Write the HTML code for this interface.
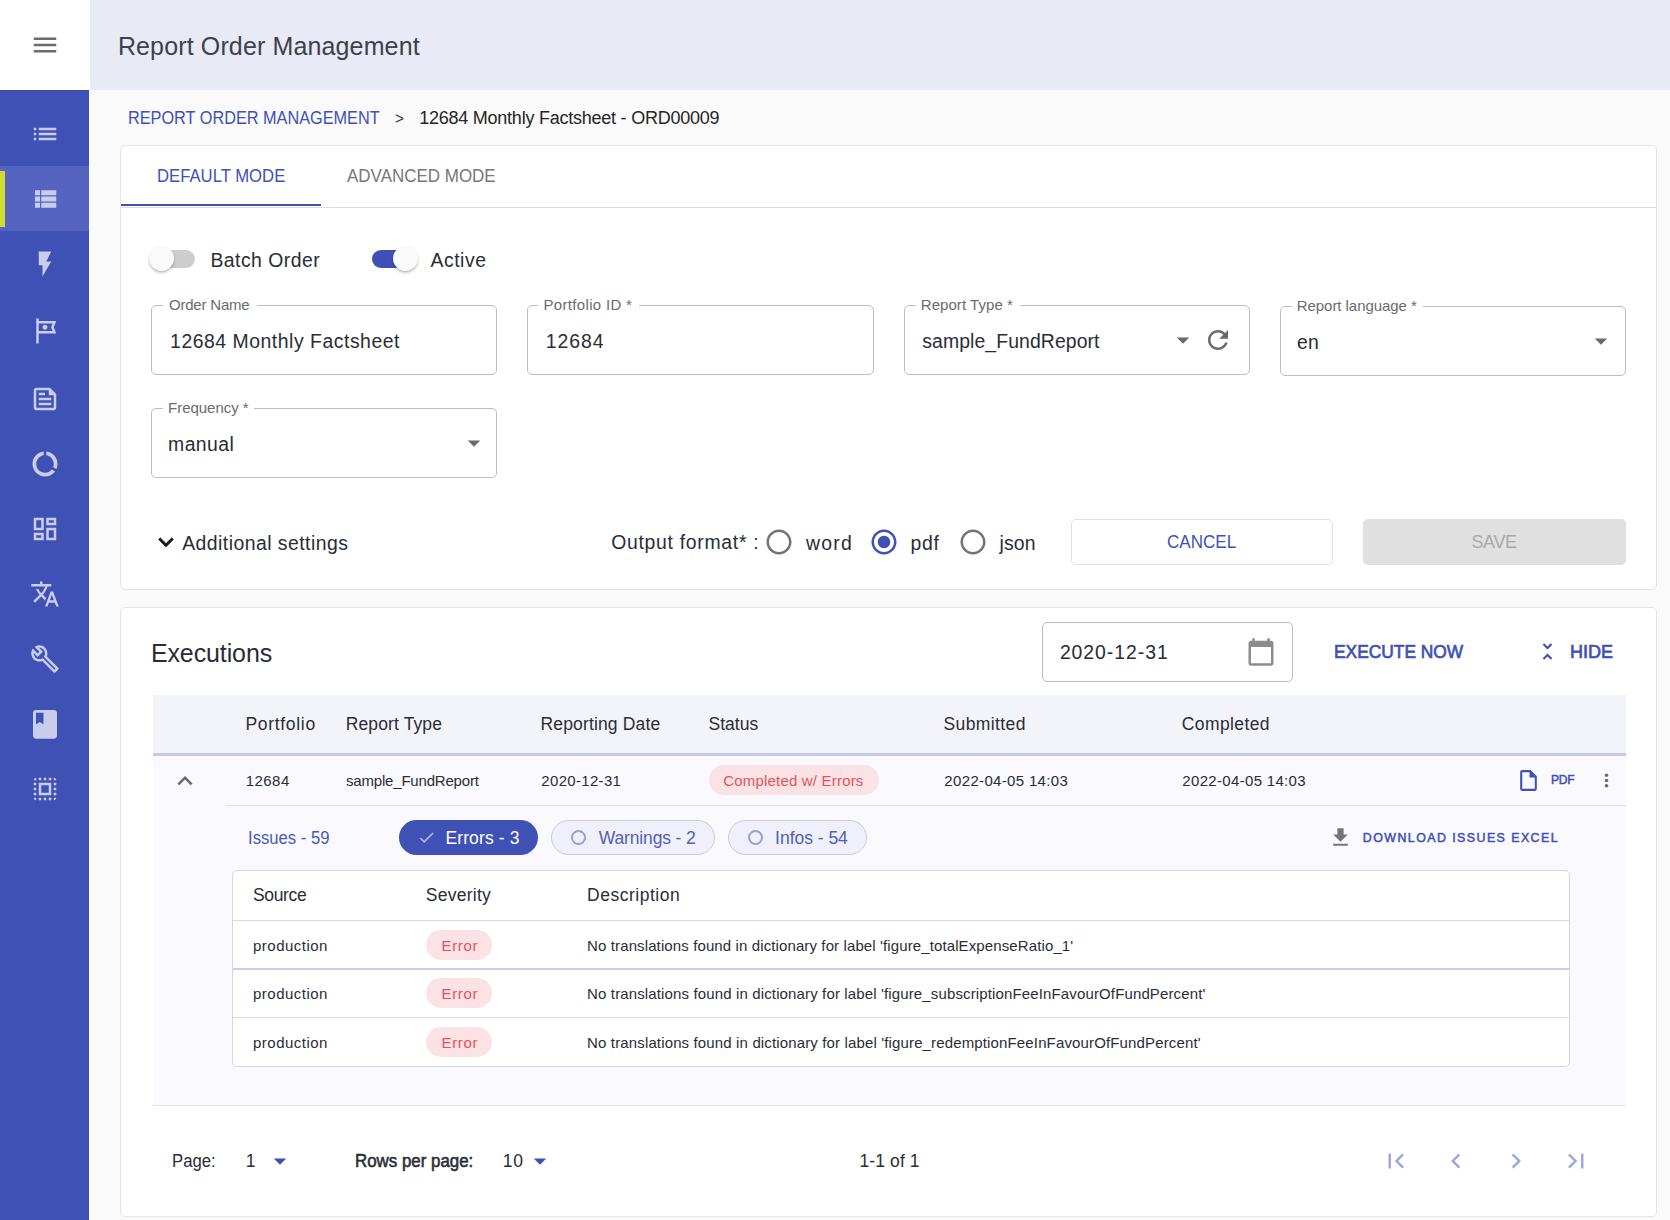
<!DOCTYPE html>
<html lang="en"><head><meta charset="utf-8"><title>Report Order Management</title>
<style>
*{box-sizing:border-box;margin:0;padding:0}
html,body{width:1670px;height:1220px;overflow:hidden;background:#fafafa}
body{position:relative;font-family:"Liberation Sans",Arial,sans-serif;}
.a{position:absolute}
.t{position:absolute;white-space:nowrap;line-height:1;transform-origin:0 50%}
.ic{position:absolute;display:block}
.card{position:absolute;background:#fff;border:1px solid #e4e4e4;border-radius:5px}
.fld{position:absolute;border:1px solid #bdbdbd;border-radius:5px;background:#fff}
.notch{position:absolute;background:#fff;height:3px}
.chip{position:absolute;border-radius:18px}
</style></head><body>
<header>
<div class="a" style="left:0px;top:0px;width:1670px;height:90px;background:#e8eaf6"></div>
<div class="a" style="left:0px;top:0px;width:90px;height:90px;background:#fff"></div>
<svg class="ic" style="left:30.00px;top:30.00px;width:30px;height:30px;" viewBox="0 0 24 24"><path fill="#6c6c6c" d="M3 18h18v-2H3v2zm0-5h18v-2H3v2zm0-7v2h18V6H3z"/></svg>
<span class="t" style="left:117.90px;top:34px;font-size:25px;color:#3d414d;letter-spacing:0.136px;">Report Order Management</span>
</header>
<nav>
<div class="a" style="left:0px;top:90px;width:89px;height:1130px;background:#3f51b5"></div>
<div class="a" style="left:0px;top:90px;width:89px;height:1px;background:#3a4aa6"></div>
<div class="a" style="left:0px;top:166px;width:89px;height:65px;background:#5464c0"></div>
<div class="a" style="left:0px;top:171px;width:5px;height:56px;background:#d3db33"></div>
<svg class="ic" style="left:30.00px;top:119.00px;width:30px;height:30px;" viewBox="0 0 24 24"><path fill="#c8cdec" d="M3 13h2v-2H3v2zm0 4h2v-2H3v2zm0-8h2V7H3v2zm4 4h14v-2H7v2zm0 4h14v-2H7v2zM7 7v2h14V7H7z"/></svg>
<svg class="ic" style="left:30.00px;top:183.80px;width:30px;height:30px;" viewBox="0 0 24 24"><path fill="#c8cdec" d="M4 14h4v-4H4v4zm0 5h4v-4H4v4zM4 9h4V5H4v4zm5 5h12v-4H9v4zm0 5h12v-4H9v4zM9 5v4h12V5H9z"/></svg>
<svg class="ic" style="left:30.00px;top:248.80px;width:30px;height:30px;" viewBox="0 0 24 24"><path fill="#c8cdec" d="M7 2v11h3v9l7-12h-4l4-8z"/></svg>
<svg class="ic" style="left:30.00px;top:316.00px;width:30px;height:30px;" viewBox="0 0 24 24"><path fill="#c8cdec" d="M21 4H7V2H5v20h2v-8h14l-2-5 2-5zm-3.86 5.74l.9 2.26H7V6h11.05l-.9 2.26-.3.74.29.74zM14 9c0 1.1-.9 2-2 2s-2-.9-2-2 .9-2 2-2 2 .9 2 2z"/></svg>
<svg class="ic" style="left:30.00px;top:383.80px;width:30px;height:30px;" viewBox="0 0 24 24"><path fill="#c8cdec" d="M16 3H5c-1.1 0-2 .9-2 2v14c0 1.1.9 2 2 2h14c1.1 0 2-.9 2-2V8l-5-5zm3 16H5V5h10v4h4v10zM7 17h10v-2H7v2zm5-10H7v2h5V7zm-5 6h10v-2H7v2z"/></svg>
<svg class="ic" style="left:30.00px;top:449.30px;width:30px;height:30px;" viewBox="0 0 24 24"><path fill="#c8cdec" d="M13 2.05v3.03c3.39.49 6 3.39 6 6.92 0 .9-.18 1.75-.48 2.54l2.6 1.53c.56-1.24.88-2.62.88-4.07 0-5.18-3.95-9.45-9-9.95zM12 19c-3.87 0-7-3.13-7-7 0-3.53 2.61-6.43 6-6.92V2.05c-5.06.5-9 4.76-9 9.95 0 5.52 4.47 10 9.99 10 3.31 0 6.24-1.61 8.06-4.09l-2.6-1.53C16.17 17.98 14.21 19 12 19z"/></svg>
<svg class="ic" style="left:30.00px;top:514.00px;width:30px;height:30px;" viewBox="0 0 24 24"><path fill="#c8cdec" d="M19 5v2h-4V5h4M9 5v6H5V5h4m10 8v6h-4v-6h4M9 17v2H5v-2h4M21 3h-8v6h8V3zM11 3H3v10h8V3zm10 8h-8v10h8V11zm-10 4H3v6h8v-6z"/></svg>
<svg class="ic" style="left:30.00px;top:579.20px;width:30px;height:30px;" viewBox="0 0 24 24"><path fill="#c8cdec" d="M12.87 15.07l-2.54-2.51.03-.03c1.74-1.94 2.98-4.17 3.71-6.53H17V4h-7V2H8v2H1v1.99h11.17C11.5 7.92 10.44 9.75 9 11.35 8.07 10.32 7.3 9.19 6.69 8h-2c.73 1.63 1.73 3.17 2.98 4.56l-5.09 5.02L4 19l5-5 3.11 3.11.76-2.04zM18.5 10h-2L12 22h2l1.12-3h4.75L21 22h2l-4.5-12zm-2.62 7l1.62-4.33L19.12 17h-3.24z"/></svg>
<svg class="ic" style="left:30.00px;top:643.70px;width:30px;height:30px;" viewBox="0 0 24 24"><path fill="#c8cdec" d="M22.61 18.99l-9.08-9.08c.93-2.34.45-5.1-1.44-7C9.79.61 6.21.4 3.66 2.26L7.5 6.11 6.08 7.52 2.25 3.69C.39 6.23.6 9.82 2.9 12.11c1.86 1.86 4.57 2.35 6.89 1.48l9.11 9.11c.39.39 1.02.39 1.41 0l2.3-2.3c.4-.38.4-1.01 0-1.41zm-3 1.6l-9.46-9.46c-.61.45-1.29.72-2 .82-1.36.2-2.79-.21-3.83-1.25C3.37 9.76 2.93 8.5 3 7.26l3.09 3.09 4.24-4.24-3.09-3.09c1.24-.07 2.49.37 3.44 1.31 1.08 1.08 1.49 2.57 1.24 3.96-.12.71-.42 1.37-.88 1.96l9.45 9.45-.88.89z"/></svg>
<svg class="ic" style="left:30.00px;top:773.90px;width:30px;height:30px;" viewBox="0 0 24 24"><path fill="#c8cdec" d="M3 5h2V3c-1.1 0-2 .9-2 2zm0 8h2v-2H3v2zm4 8h2v-2H7v2zM3 9h2V7H3v2zm10-6h-2v2h2V3zm6 0v2h2c0-1.1-.9-2-2-2zM5 21v-2H3c0 1.1.9 2 2 2zm-2-4h2v-2H3v2zM9 3H7v2h2V3zm2 18h2v-2h-2v2zm8-8h2v-2h-2v2zm0 8c1.1 0 2-.9 2-2h-2v2zm0-12h2V7h-2v2zm0 8h2v-2h-2v2zm-4 4h2v-2h-2v2zm0-16h2V3h-2v2zM7 17h10V7H7v10zm2-8h6v6H9V9z"/></svg>
<svg class="ic" style="left:27px;top:707.2px;width:36px;height:34.5px" viewBox="0 0 24 24" preserveAspectRatio="none"><path fill="#c8cdec" d="M18 2H6c-1.1 0-2 .9-2 2v16c0 1.1.9 2 2 2h12c1.1 0 2-.9 2-2V4c0-1.1-.9-2-2-2zM6 4h5v8l-2.5-1.5L6 12V4z"/></svg>
</nav>
<main>
<div>
<span class="t" style="left:127.74px;top:109px;font-size:18px;color:#3f51b5;transform:scaleX(0.9040);">REPORT ORDER MANAGEMENT</span>
<span class="t" style="left:395.00px;top:110px;font-size:17px;color:#333;transform:scaleX(0.9063);">&gt;</span>
<span class="t" style="left:419.16px;top:109px;font-size:18px;color:#262626;letter-spacing:-0.236px;">12684 Monthly Factsheet - ORD00009</span>
</div>
<section>
<div class="card" style="left:120px;top:145px;width:1537px;height:445px;"></div>
<div class="a" style="left:121px;top:207px;width:1535px;height:1px;background:#dcdcdc"></div>
<div class="a" style="left:121px;top:203.7px;width:200px;height:2.6px;background:#3f51b5"></div>
<span class="t" style="left:157.10px;top:167px;font-size:18px;color:#3f51b5;transform:scaleX(0.9270);">DEFAULT MODE</span>
<span class="t" style="left:347.00px;top:167px;font-size:18px;color:#777;transform:scaleX(0.9427);">ADVANCED MODE</span>
<div class="a" style="left:150px;top:250.2px;width:45px;height:17.4px;background:#cdcdcd;border-radius:9px"></div>
<div class="a" style="left:148.6px;top:245.6px;width:25px;height:25px;background:#fafafa;border-radius:50%;box-shadow:0 2px 3px rgba(0,0,0,.2),0 1px 1px rgba(0,0,0,.1)"></div>
<span class="t" style="left:210.40px;top:251px;font-size:19.4px;color:#2a2d36;letter-spacing:0.480px;">Batch Order</span>
<div class="a" style="left:371.5px;top:250.2px;width:45px;height:17.4px;background:#3f4fb5;border-radius:9px"></div>
<div class="a" style="left:392.6px;top:245.6px;width:25px;height:25px;background:#fafafa;border-radius:50%;box-shadow:0 2px 3px rgba(0,0,0,.2),0 1px 1px rgba(0,0,0,.1)"></div>
<span class="t" style="left:430.42px;top:251px;font-size:19.4px;color:#2a2d36;letter-spacing:0.560px;">Active</span>
<div class="fld" style="left:151px;top:305px;width:346px;height:70px;"></div>
<div class="notch" style="left:162.6px;top:304px;width:94.6px;height:3px;"></div>
<span class="t" style="left:168.94px;top:297px;font-size:15px;color:#6b6b6b;letter-spacing:-0.200px;">Order Name</span>
<span class="t" style="left:170.10px;top:332px;font-size:19.4px;color:#2a2d36;letter-spacing:0.527px;">12684 Monthly Factsheet</span>
<div class="fld" style="left:527px;top:305px;width:347px;height:70px;"></div>
<div class="notch" style="left:538px;top:304px;width:101.4px;height:3px;"></div>
<span class="t" style="left:543.52px;top:297px;font-size:15px;color:#6b6b6b;letter-spacing:0.323px;">Portfolio ID *</span>
<span class="t" style="left:545.74px;top:332px;font-size:19.4px;color:#2a2d36;letter-spacing:0.950px;">12684</span>
<div class="fld" style="left:904px;top:305px;width:346px;height:70px;"></div>
<div class="notch" style="left:915.5px;top:304px;width:104px;height:3px;"></div>
<span class="t" style="left:920.82px;top:297px;font-size:15px;color:#6b6b6b;letter-spacing:0.050px;">Report Type *</span>
<span class="t" style="left:922.22px;top:332px;font-size:19.4px;color:#2a2d36;letter-spacing:0.100px;">sample_FundReport</span>
<div class="fld" style="left:1280px;top:306px;width:346px;height:70px;"></div>
<div class="notch" style="left:1291.5px;top:305px;width:131.1px;height:3px;"></div>
<span class="t" style="left:1296.74px;top:298px;font-size:15px;color:#6b6b6b;letter-spacing:-0.050px;">Report language *</span>
<span class="t" style="left:1296.94px;top:333px;font-size:19.4px;color:#2a2d36;letter-spacing:0.200px;">en</span>
<div class="fld" style="left:151px;top:408px;width:346px;height:70px;"></div>
<div class="notch" style="left:162.6px;top:407px;width:91.4px;height:3px;"></div>
<span class="t" style="left:168.10px;top:400px;font-size:15px;color:#6b6b6b;letter-spacing:-0.040px;">Frequency *</span>
<span class="t" style="left:168.10px;top:435px;font-size:19.4px;color:#2a2d36;letter-spacing:0.400px;">manual</span>
<svg class="ic" style="left:1167.60px;top:325.10px;width:30px;height:30px;" viewBox="0 0 24 24"><path fill="#6a6a6a" d="M7 10l5 5 5-5z"/></svg>
<svg class="ic" style="left:1203.10px;top:325.00px;width:30px;height:30px;" viewBox="0 0 24 24"><path fill="#6a6a6a" d="M17.65 6.35C16.2 4.9 14.21 4 12 4c-4.42 0-7.99 3.58-7.99 8s3.57 8 7.99 8c3.73 0 6.84-2.55 7.73-6h-2.08c-.82 2.33-3.04 4-5.65 4-3.31 0-6-2.69-6-6s2.69-6 6-6c1.66 0 3.14.69 4.22 1.78L13 11h7V4l-2.35 2.35z"/></svg>
<svg class="ic" style="left:1586.40px;top:326.20px;width:30px;height:30px;" viewBox="0 0 24 24"><path fill="#6a6a6a" d="M7 10l5 5 5-5z"/></svg>
<svg class="ic" style="left:459.30px;top:428.00px;width:30px;height:30px;" viewBox="0 0 24 24"><path fill="#6a6a6a" d="M7 10l5 5 5-5z"/></svg>
<svg class="ic" style="left:151.10px;top:526.80px;width:30px;height:30px;stroke:#1a1a1a;stroke-width:.5px;" viewBox="0 0 24 24"><path fill="#1a1a1a" d="M16.59 8.59L12 13.17 7.41 8.59 6 10l6 6 6-6z"/></svg>
<span class="t" style="left:182.14px;top:534px;font-size:19.4px;color:#2a2d36;letter-spacing:0.467px;">Additional settings</span>
<span class="t" style="left:611.22px;top:533px;font-size:19.4px;color:#2a2d36;letter-spacing:0.707px;">Output format* :</span>
<svg class="ic" style="left:764.00px;top:526.90px;width:30px;height:30px;" viewBox="0 0 24 24"><path fill="#737373" d="M12 2C6.48 2 2 6.48 2 12s4.48 10 10 10 10-4.48 10-10S17.52 2 12 2zm0 18c-4.42 0-8-3.58-8-8s3.58-8 8-8 8 3.58 8 8-3.58 8-8 8z"/></svg>
<span class="t" style="left:806.00px;top:534px;font-size:19.4px;color:#2a2d36;letter-spacing:1.267px;">word</span>
<svg class="ic" style="left:869.20px;top:526.90px;width:30px;height:30px;" viewBox="0 0 24 24"><path fill="#3f51b5" d="M12 7c-2.76 0-5 2.24-5 5s2.24 5 5 5 5-2.24 5-5-2.24-5-5-5zm0-5C6.48 2 2 6.48 2 12s4.48 10 10 10 10-4.48 10-10S17.52 2 12 2zm0 18c-4.42 0-8-3.58-8-8s3.58-8 8-8 8 3.58 8 8-3.58 8-8 8z"/></svg>
<span class="t" style="left:910.46px;top:534px;font-size:19.4px;color:#2a2d36;letter-spacing:0.800px;">pdf</span>
<svg class="ic" style="left:957.70px;top:526.90px;width:30px;height:30px;" viewBox="0 0 24 24"><path fill="#737373" d="M12 2C6.48 2 2 6.48 2 12s4.48 10 10 10 10-4.48 10-10S17.52 2 12 2zm0 18c-4.42 0-8-3.58-8-8s3.58-8 8-8 8 3.58 8 8-3.58 8-8 8z"/></svg>
<span class="t" style="left:999.48px;top:534px;font-size:19.4px;color:#2a2d36;letter-spacing:0.200px;">json</span>
<div class="a" style="left:1071px;top:519px;width:262px;height:46px;background:#fff;border:1px solid #e0e0e0;border-radius:5px"></div>
<span class="t" style="left:1167.04px;top:533px;font-size:18px;color:#3f51b5;transform:scaleX(0.9473);">CANCEL</span>
<div class="a" style="left:1363px;top:519px;width:263px;height:46px;background:#e0e0e0;border-radius:5px"></div>
<span class="t" style="left:1471.38px;top:533px;font-size:18px;color:#a9a9a9;letter-spacing:-0.333px;">SAVE</span>
</section>
<section>
<div class="card" style="left:120px;top:607px;width:1537px;height:610px;"></div>
<span class="t" style="left:150.90px;top:641px;font-size:25px;color:#2a2d36;letter-spacing:-0.111px;">Executions</span>
<div class="fld" style="left:1042px;top:622px;width:251px;height:60px;"></div>
<span class="t" style="left:1059.88px;top:643px;font-size:19.4px;color:#2a2d36;letter-spacing:0.956px;">2020-12-31</span>
<svg class="ic" style="left:1246.00px;top:636.75px;width:30px;height:30px;" viewBox="0 0 24 24"><path fill="#8c8c8c" d="M20 3h-1V1h-2v2H7V1H5v2H4c-1.1 0-2 .9-2 2v16c0 1.1.9 2 2 2h16c1.1 0 2-.9 2-2V5c0-1.1-.9-2-2-2zm0 18H4V8h16v13z"/></svg>
<span class="t" style="left:1333.68px;top:643px;font-size:18px;color:#3f51b5;transform:scaleX(0.9642);-webkit-text-stroke:0.7px #3f51b5;">EXECUTE NOW</span>
<svg class="ic" style="left:1535.10px;top:639.00px;width:25px;height:25px;" viewBox="0 0 24 24"><path fill="#3f51b5" d="M7.41 18.59L8.83 20 12 16.83 15.17 20l1.41-1.41L12 14l-4.59 4.59zm9.18-13.18L15.17 4 12 7.17 8.83 4 7.41 5.41 12 10l4.59-4.59z"/></svg>
<span class="t" style="left:1570.10px;top:643px;font-size:18px;color:#3f51b5;-webkit-text-stroke:0.7px #3f51b5;">HIDE</span>
<div class="a" style="left:153px;top:695px;width:1473px;height:58px;background:#f3f4fa"></div>
<div class="a" style="left:153px;top:753px;width:1473px;height:2.6px;background:#c5cae9"></div>
<div class="a" style="left:153px;top:755.6px;width:1473px;height:349.4px;background:#f9f9fe"></div>
<span class="t" style="left:245.52px;top:716px;font-size:17.5px;color:#2a2d36;letter-spacing:0.675px;">Portfolio</span>
<span class="t" style="left:345.74px;top:716px;font-size:17.5px;color:#2a2d36;letter-spacing:0.120px;">Report Type</span>
<span class="t" style="left:540.46px;top:716px;font-size:17.5px;color:#2a2d36;letter-spacing:0.154px;">Reporting Date</span>
<span class="t" style="left:708.52px;top:716px;font-size:17.5px;color:#2a2d36;">Status</span>
<span class="t" style="left:943.46px;top:716px;font-size:17.5px;color:#2a2d36;letter-spacing:0.400px;">Submitted</span>
<span class="t" style="left:1181.86px;top:716px;font-size:17.5px;color:#2a2d36;letter-spacing:0.375px;">Completed</span>
<svg class="ic" style="left:170.00px;top:766.40px;width:30px;height:30px;" viewBox="0 0 24 24"><path fill="#6a6a6a" d="M12 8l-6 6 1.41 1.41L12 10.83l4.59 4.58L18 14z"/></svg>
<span class="t" style="left:245.74px;top:773px;font-size:15px;color:#2a2d36;letter-spacing:0.450px;">12684</span>
<span class="t" style="left:346.00px;top:773px;font-size:15px;color:#2a2d36;letter-spacing:-0.188px;">sample_FundReport</span>
<span class="t" style="left:541.36px;top:773px;font-size:15px;color:#2a2d36;letter-spacing:0.311px;">2020-12-31</span>
<span class="t" style="left:944.36px;top:773px;font-size:15px;color:#2a2d36;letter-spacing:0.333px;">2022-04-05 14:03</span>
<span class="t" style="left:1182.36px;top:773px;font-size:15px;color:#2a2d36;letter-spacing:0.320px;">2022-04-05 14:03</span>
<div class="chip" style="left:709px;top:765px;width:170px;height:30px;background:#fbe2e5"></div>
<span class="t" style="left:723.24px;top:773px;font-size:15px;color:#e2525b;letter-spacing:0.189px;">Completed w/ Errors</span>
<svg class="ic" style="left:1515.90px;top:767.90px;width:25px;height:25px;" viewBox="0 0 24 24"><path fill="#3f51b5" d="M14 2H6c-1.1 0-1.99.9-1.99 2L4 20c0 1.1.89 2 1.99 2H18c1.1 0 2-.9 2-2V8l-6-6zM6 20V4h7v5h5v11H6z"/></svg>
<span class="t" style="left:1550.88px;top:774px;font-size:12px;color:#3f51b5;letter-spacing:-0.100px;-webkit-text-stroke:0.5px #3f51b5;">PDF</span>
<svg class="ic" style="left:1595.50px;top:769.50px;width:21px;height:21px;" viewBox="0 0 24 24"><path fill="#6a6a6a" d="M12 8c1.1 0 2-.9 2-2s-.9-2-2-2-2 .9-2 2 .9 2 2 2zm0 2c-1.1 0-2 .9-2 2s.9 2 2 2 2-.9 2-2-.9-2-2-2zm0 6c-1.1 0-2 .9-2 2s.9 2 2 2 2-.9 2-2-.9-2-2-2z"/></svg>
<div class="a" style="left:225px;top:805px;width:1401px;height:1px;background:#e2e2e6"></div>
<span class="t" style="left:248.10px;top:830px;font-size:17.5px;color:#4a59b5;transform:scaleX(0.9525);">Issues - 59</span>
<div class="chip" style="left:399px;top:820px;width:139px;height:35px;background:#3f51b5"></div>
<svg class="ic" style="left:416.80px;top:828.00px;width:19px;height:19px;" viewBox="0 0 24 24"><path fill="#b4bbe4" d="M9 16.17L4.83 12l-1.42 1.41L9 19 21 7l-1.41-1.41z"/></svg>
<span class="t" style="left:445.40px;top:830px;font-size:17.5px;color:#fff;letter-spacing:0.133px;">Errors - 3</span>
<div class="chip" style="left:551px;top:820px;width:164px;height:35px;background:#eff0f9;border:1px solid #c8cbe4"></div>
<div class="a" style="left:571px;top:830px;width:15px;height:15px;border:2px solid #979fd6;border-radius:50%"></div>
<span class="t" style="left:598.78px;top:830px;font-size:17.5px;color:#5360b3;letter-spacing:-0.145px;">Warnings - 2</span>
<div class="chip" style="left:728px;top:820px;width:139px;height:35px;background:#eff0f9;border:1px solid #c8cbe4"></div>
<div class="a" style="left:748.4px;top:830px;width:15px;height:15px;border:2px solid #979fd6;border-radius:50%"></div>
<span class="t" style="left:775.10px;top:830px;font-size:17.5px;color:#5360b3;letter-spacing:-0.022px;">Infos - 54</span>
<svg class="ic" style="left:1328.00px;top:824.90px;width:25px;height:25px;" viewBox="0 0 24 24"><path fill="#757575" d="M19 9h-4V3H9v6H5l7 7 7-7zM5 18v2h14v-2H5z"/></svg>
<span class="t" style="left:1362.86px;top:832px;font-size:12.4px;color:#3f51b5;letter-spacing:1.440px;-webkit-text-stroke:0.5px #3f51b5;">DOWNLOAD ISSUES EXCEL</span>
<div class="a" style="left:232px;top:870px;width:1338px;height:197px;background:#fff;border:1px solid #d4d6df;border-radius:5px"></div>
<div class="a" style="left:233px;top:920px;width:1336px;height:1px;background:#d9dae0"></div>
<div class="a" style="left:233px;top:968px;width:1336px;height:1.8px;background:#c9cdea"></div>
<div class="a" style="left:233px;top:1017px;width:1336px;height:1px;background:#d9dae0"></div>
<span class="t" style="left:252.94px;top:887px;font-size:17.5px;color:#2a2d36;letter-spacing:-0.320px;">Source</span>
<span class="t" style="left:425.74px;top:887px;font-size:17.5px;color:#2a2d36;letter-spacing:0.257px;">Severity</span>
<span class="t" style="left:587.10px;top:887px;font-size:17.5px;color:#2a2d36;letter-spacing:0.500px;">Description</span>
<span class="t" style="left:253.00px;top:938px;font-size:15px;color:#2a2d36;letter-spacing:0.489px;">production</span>
<div class="chip" style="left:426px;top:930px;width:66px;height:30px;background:#fbe2e5"></div>
<span class="t" style="left:441.52px;top:938px;font-size:15px;color:#e2525b;letter-spacing:0.650px;">Error</span>
<span class="t" style="left:587.10px;top:938px;font-size:15px;color:#2a2d36;letter-spacing:0.115px;">No translations found in dictionary for label 'figure_totalExpenseRatio_1'</span>
<span class="t" style="left:253.00px;top:986px;font-size:15px;color:#2a2d36;letter-spacing:0.489px;">production</span>
<div class="chip" style="left:426px;top:978px;width:66px;height:30px;background:#fbe2e5"></div>
<span class="t" style="left:441.52px;top:986px;font-size:15px;color:#e2525b;letter-spacing:0.650px;">Error</span>
<span class="t" style="left:587.10px;top:986px;font-size:15px;color:#2a2d36;letter-spacing:0.136px;">No translations found in dictionary for label 'figure_subscriptionFeeInFavourOfFundPercent'</span>
<span class="t" style="left:253.00px;top:1035px;font-size:15px;color:#2a2d36;letter-spacing:0.489px;">production</span>
<div class="chip" style="left:426px;top:1027px;width:66px;height:30px;background:#fbe2e5"></div>
<span class="t" style="left:441.52px;top:1035px;font-size:15px;color:#e2525b;letter-spacing:0.650px;">Error</span>
<span class="t" style="left:587.10px;top:1035px;font-size:15px;color:#2a2d36;letter-spacing:0.141px;">No translations found in dictionary for label 'figure_redemptionFeeInFavourOfFundPercent'</span>
<div class="a" style="left:153px;top:1105px;width:1473px;height:1px;background:#e2e2e6"></div>
<span class="t" style="left:171.76px;top:1153px;font-size:17.5px;color:#2a2d36;transform:scaleX(0.9545);">Page:</span>
<span class="t" style="left:245.80px;top:1153px;font-size:17.5px;color:#2a2d36;">1</span>
<svg class="ic" style="left:265.40px;top:1145.90px;width:30px;height:30px;" viewBox="0 0 24 24"><path fill="#3f51b5" d="M7 10l5 5 5-5z"/></svg>
<span class="t" style="left:354.68px;top:1153px;font-size:17.5px;color:#2a2d36;transform:scaleX(0.9653);-webkit-text-stroke:0.55px #2a2d36;">Rows per page:</span>
<span class="t" style="left:502.68px;top:1153px;font-size:17.5px;color:#2a2d36;letter-spacing:0.800px;">10</span>
<svg class="ic" style="left:524.70px;top:1145.90px;width:30px;height:30px;" viewBox="0 0 24 24"><path fill="#3f51b5" d="M7 10l5 5 5-5z"/></svg>
<span class="t" style="left:859.46px;top:1153px;font-size:17.5px;color:#2a2d36;letter-spacing:0.114px;">1-1 of 1</span>
<svg class="ic" style="left:1381.00px;top:1145.80px;width:30px;height:30px;" viewBox="0 0 24 24"><path fill="#9fa8da" d="M18.41 16.59L13.82 12l4.59-4.59L17 6l-6 6 6 6zM6 6h2v12H6z"/></svg>
<svg class="ic" style="left:1440.60px;top:1145.80px;width:30px;height:30px;" viewBox="0 0 24 24"><path fill="#9fa8da" d="M15.41 7.41L14 6l-6 6 6 6 1.41-1.41L10.83 12z"/></svg>
<svg class="ic" style="left:1501.20px;top:1145.80px;width:30px;height:30px;" viewBox="0 0 24 24"><path fill="#9fa8da" d="M10 6L8.59 7.41 13.17 12l-4.58 4.59L10 18l6-6z"/></svg>
<svg class="ic" style="left:1561.00px;top:1145.80px;width:30px;height:30px;" viewBox="0 0 24 24"><path fill="#9fa8da" d="M5.59 7.41L10.18 12l-4.59 4.59L7 18l6-6-6-6zM16 6h2v12h-2z"/></svg>
</section>
</main>
</body></html>
